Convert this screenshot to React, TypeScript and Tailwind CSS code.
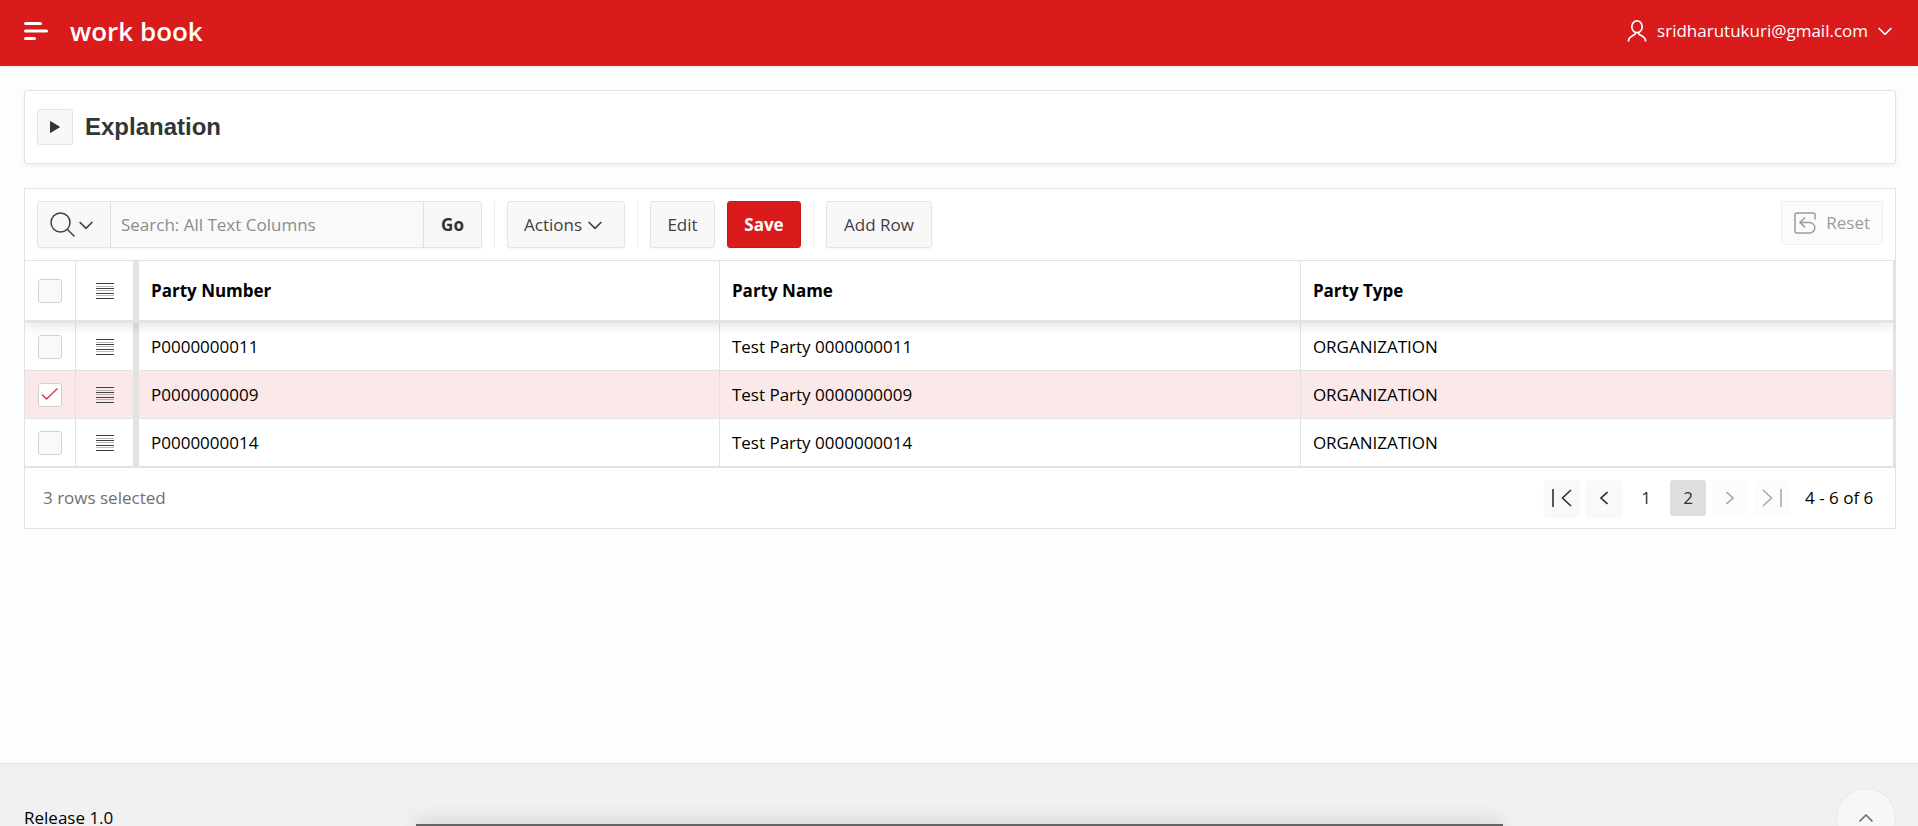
import type { ReactNode } from "react";

const rows = [
  { id: "P0000000011", name: "Test Party 0000000011", type: "ORGANIZATION", selected: false },
  { id: "P0000000009", name: "Test Party 0000000009", type: "ORGANIZATION", selected: true },
  { id: "P0000000014", name: "Test Party 0000000014", type: "ORGANIZATION", selected: false },
];

function Chevron({ className, d = "M.6 1 7 7.400 13.400 1", box = "0 0 14 8" }: { className: string; d?: string; box?: string }) {
  return (
    <svg viewBox={box} className={className} fill="none" stroke="currentColor" strokeWidth="1.6" aria-hidden="true">
      <path d={d} />
    </svg>
  );
}

function RowMenu() {
  return (
    <button type="button" aria-label="Row actions" className="mx-auto block text-[#404040]">
      <svg viewBox="0 0 18 16" className="h-4 w-[18px]" fill="currentColor" aria-hidden="true">
        <path d="M0 0h18v1H0zM0 5h18v1H0zM0 10h18v1H0zM0 15h18v1H0z" />
        <path d="M0 3h18v1H0zM0 7h18v1H0zM0 12h18v1H0z" opacity=".35" />
      </svg>
    </button>
  );
}

function Check({ label, checked }: { label: string; checked?: boolean }) {
  return (
    <span className="relative mx-auto block size-6">
      <input
        type="checkbox"
        aria-label={label}
        defaultChecked={checked}
        className="peer block size-6 appearance-none rounded-[3px] border border-[#d0d0d0] bg-[#f9f9f9] checked:bg-white"
      />
      <svg viewBox="0 0 24 24" className="pointer-events-none absolute inset-0 hidden size-6 peer-checked:block" fill="none" stroke="#cc3a42" strokeWidth="1.3" aria-hidden="true">
        <path d="M4 11.500 8.500 16 19.500 5.500" />
      </svg>
    </span>
  );
}

function Button({ children, className = "" }: { children: ReactNode; className?: string }) {
  return (
    <button type="button" className={`flex h-[47px] items-center rounded-[3px] border px-4 shadow-[0_2px_2px_rgba(0,0,0,0.03)] ${className}`}>
      {children}
    </button>
  );
}

const plain = "border-[#e4e4e4] bg-[#f8f8f8] text-[#404040]";

function Divider() {
  return <span className="mx-3 w-px self-stretch bg-[#ededed]" />;
}

function PageButton({ label, children, className = "bg-[#f9f9f9] shadow-[0_2px_2px_rgba(0,0,0,0.03)]", disabled }: { label: string; children: ReactNode; className?: string; disabled?: boolean }) {
  return (
    <button type="button" aria-label={label} disabled={disabled} className={`flex size-9 items-center justify-center rounded-[3px] text-[#303030] disabled:text-[#a8a8a8] ${className}`}>
      {children}
    </button>
  );
}

export default function App() {
  return (
    <div className="flex h-screen flex-col overflow-hidden bg-[#fdfdfd] font-['Open_Sans',sans-serif] text-[17px] leading-6 text-black">
      <header className="flex h-[66px] shrink-0 items-center justify-between bg-[#da1b1b] pr-[26px] pl-6 text-white shadow-[0_1px_3px_rgba(0,0,0,0.08)]">
        <div className="flex items-center gap-[22px] pb-1">
          <button type="button" aria-label="Main navigation">
            <svg viewBox="0 0 24 18" className="h-[18px] w-6" stroke="currentColor" strokeWidth="3" strokeLinecap="round" aria-hidden="true">
              <path d="M1.500 1.500h15M1.500 9h21M1.500 16.500h9" />
            </svg>
          </button>
          <a href="#home" className="text-[26px] leading-8 font-semibold">work book</a>
        </div>
        <button type="button" className="flex items-center pb-1">
          <svg viewBox="0 0 20 22" className="h-[22px] w-5" fill="none" stroke="currentColor" strokeWidth="1.7" aria-hidden="true">
            <ellipse cx="10" cy="6.800" rx="5.200" ry="5.900" />
            <path d="M1.500 21.500v-1c0-3.500 3.500-4.500 6.500-6.300l.5-1.800M18.500 21.500v-1c0-3.500-3.500-4.500-6.500-6.300l-.5-1.800" />
          </svg>
          <span className="mr-[10px] ml-[10px]">sridharutukuri@gmail.com</span>
          <Chevron className="h-2 w-[14px]" />
        </button>
      </header>

      <main className="flex grow flex-col gap-6 pt-6 pr-[22px] pl-6">
        <section className="flex items-center rounded-[3px] border border-[#e2e2e2] bg-white px-3 py-[18px] shadow-[0_2px_4px_rgba(0,0,0,0.06)]">
          <button type="button" aria-label="Expand Explanation" className="flex h-9 w-9 items-center justify-center rounded-[3px] border border-[#e2e2e2] bg-[#f8f8f8]">
            <svg viewBox="0 0 10 12" className="h-3 w-[10px]" fill="#323639" aria-hidden="true">
              <path d="M0 0.500Q0-.2.8.2l8.700 5.300q.8.500 0 1L.8 11.800Q0 12.200 0 11.500z" />
            </svg>
          </button>
          <h2 className="ml-3 font-['Liberation_Sans',Arial,sans-serif] text-2xl leading-8 font-bold text-[#323639]">Explanation</h2>
        </section>

        <section className="border border-[#e2e2e2] bg-white">
          <div className="flex items-start justify-between p-3">
            <div className="flex items-center">
              <div className={`flex h-[47px] items-stretch rounded-[3px] border shadow-[0_2px_2px_rgba(0,0,0,0.03)] ${plain}`}>
                <button type="button" aria-label="Select columns to search" className="flex w-[72px] items-center gap-1 pl-3">
                  <svg viewBox="0 0 25 25" className="size-[25px]" fill="none" stroke="currentColor" strokeWidth="1.5" aria-hidden="true">
                    <circle cx="10.500" cy="10.500" r="9.500" />
                    <path d="m17.500 17.500 7 7" />
                  </svg>
                  <Chevron className="h-2 w-[14px]" />
                </button>
                <input type="search" aria-label="Search" placeholder="Search: All Text Columns" className="w-[314px] border-x border-[#dfdfdf] bg-[#f9f9f9] px-[10px] placeholder:text-[#8c8c8c] focus:outline-none" />
                <button type="button" className="w-[57px] font-bold text-[#303030]">Go</button>
              </div>
              <Divider />
              <Button className={`w-[118px] gap-[6px] ${plain}`}>
                Actions
                <Chevron className="h-2 w-[14px]" />
              </Button>
              <Divider />
              <Button className={`min-w-[65px] justify-center ${plain}`}>Edit</Button>
              <Button className="ml-3 min-w-[74px] justify-center border-[#c81818] bg-[#da1b1b] font-bold text-white">Save</Button>
              <Divider />
              <Button className={`min-w-[106px] justify-center ${plain}`}>Add Row</Button>
            </div>
            <button type="button" disabled className="flex h-11 items-center gap-[10px] rounded-[3px] border border-[#f0f0f0] bg-[#fbfbfb] px-3 text-[#9c9c9c]">
              <svg viewBox="0 0 22 22" className="size-[22px]" fill="none" stroke="currentColor" strokeWidth="1.5" aria-hidden="true">
                <path d="M21 7.500V2.500q0-1.500-1.500-1.500h-17Q1 1 1 2.500v17Q1 21 2.500 21h13a5.300 5.300 0 0 0 0-10.600H6M11 5.500l-5 4.900 5 5" />
              </svg>
              Reset
            </button>
          </div>

          <div className="overflow-hidden border-y border-r-2 border-[#e2e2e2]">
            <table className="w-full table-fixed border-separate border-spacing-0 text-left">
              <colgroup>
                <col className="w-[51px]" />
                <col className="w-[63px]" />
                <col className="w-[31.1%]" />
                <col className="w-[31.1%]" />
                <col />
              </colgroup>
              <thead className="relative shadow-[0_5px_10px_rgba(0,0,0,0.08)] [&_th]:border-b-[3px] [&_th]:border-b-[#e4e4e4]">
                <tr className="h-[62px]">
                  <th className="border-r border-[#e2e2e2]"><Check label="Select all rows" /></th>
                  <th className="border-r-[6px] border-[#e4e4e4]"><RowMenu /></th>
                  <th className="border-r border-[#e2e2e2] px-3">Party Number</th>
                  <th className="border-r border-[#e2e2e2] px-3">Party Name</th>
                  <th className="px-3">Party Type</th>
                </tr>
              </thead>
              <tbody className="[&_td]:border-b [&_td]:border-[#e2e2e2]">
                {rows.map((row) => (
                  <tr key={row.id} className={`h-12 ${row.selected ? "bg-[#fbe8e9]" : ""}`}>
                    <td className="border-r"><Check label={`Select ${row.id}`} checked={row.selected} /></td>
                    <td className="border-r-[6px]"><RowMenu /></td>
                    <td className="border-r px-3">{row.id}</td>
                    <td className="border-r px-3">{row.name}</td>
                    <td className="px-3">{row.type}</td>
                  </tr>
                ))}
              </tbody>
            </table>
          </div>

          <div className="flex items-center justify-between px-[18px] py-3">
            <span className="text-[#707070]">3 rows selected</span>
            <nav aria-label="Pagination" className="flex items-center gap-[6px]">
              <PageButton label="First page">
                <Chevron className="h-[18px] w-5" box="0 0 20 18" d="M1 0v18M19 1l-8.500 8 8.500 8" />
              </PageButton>
              <PageButton label="Previous page">
                <Chevron className="h-[14px] w-2" box="0 0 8 14" d="M7.500 1 1 7l6.500 6" />
              </PageButton>
              <PageButton label="Page 1" className="">1</PageButton>
              <PageButton label="Page 2" className="bg-[#dfdfdf]">2</PageButton>
              <PageButton label="Next page" disabled className="bg-[#fcfcfc]">
                <Chevron className="h-[14px] w-2" box="0 0 8 14" d="M.5 1 7 7 .5 13" />
              </PageButton>
              <PageButton label="Last page" disabled className="bg-[#fcfcfc]">
                <Chevron className="h-[18px] w-5" box="0 0 20 18" d="M19 0v18M1 1l8.500 8L1 17" />
              </PageButton>
              <span className="ml-[9px] min-w-[72px]">4 - 6 of 6</span>
            </nav>
          </div>
        </section>
      </main>

      <footer className="relative flex h-[63px] shrink-0 items-start justify-between overflow-hidden border-t border-[#e0e0e0] bg-[#f1f1f1] pr-[22px] pl-6">
        <span className="pt-[46px] leading-4">Release 1.0</span>
        <a href="#top" aria-label="Start of page" className="mt-6 flex size-[60px] shrink-0 items-center justify-center rounded-full border border-[#e8e8e8] bg-[#f7f7f7] text-[#707070]">
          <Chevron className="h-2 w-[14px]" d="M.6 7.400 7 1l6.400 6.400" />
        </a>
        <span className="absolute top-[60px] right-[415px] left-[416px] h-1 bg-[#666364] shadow-[0_0_20px_rgba(0,0,0,0.4)]" />
      </footer>
    </div>
  );
}
